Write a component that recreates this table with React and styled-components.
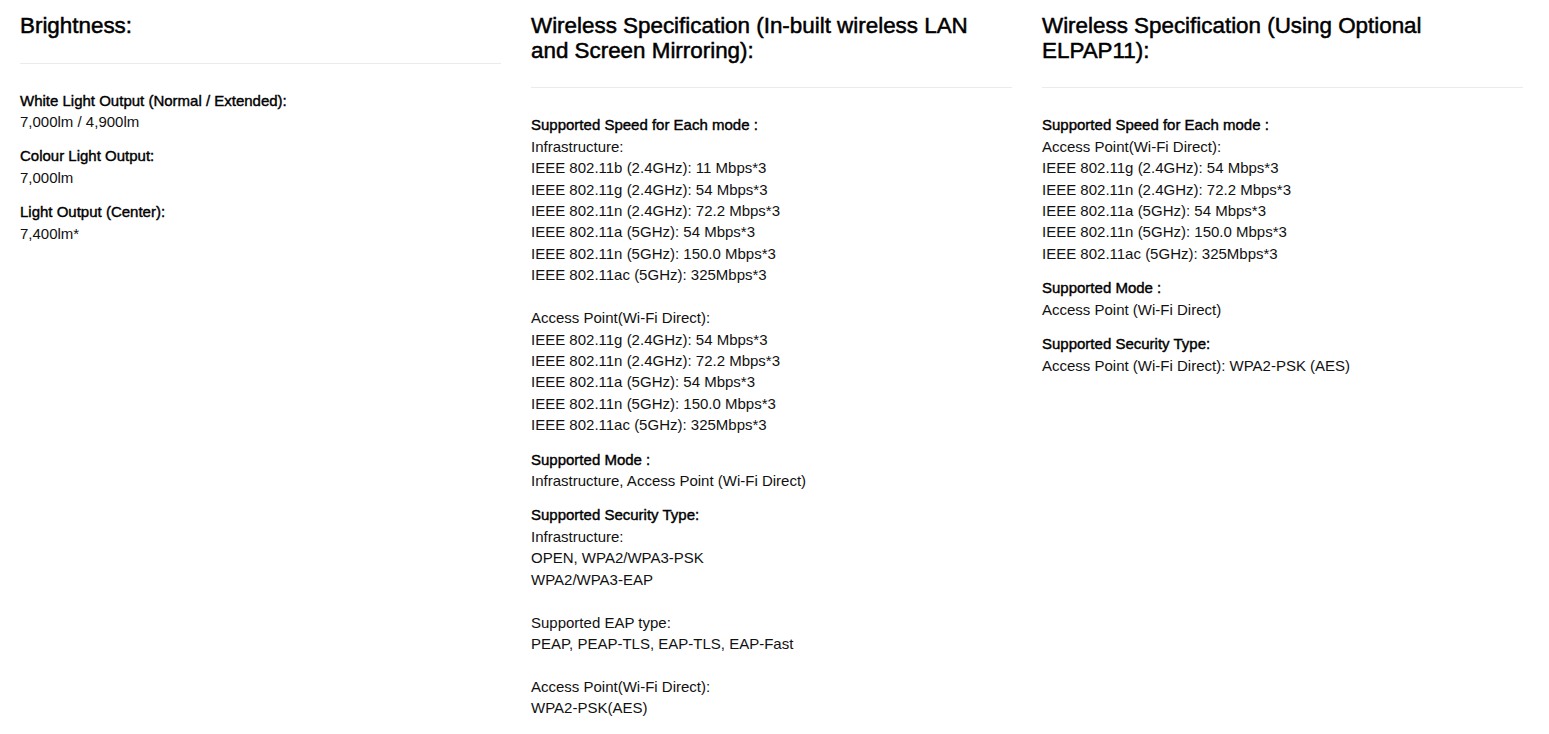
import React from 'react';
import styled, { createGlobalStyle } from 'styled-components';

const GlobalStyle = createGlobalStyle`
  body {
    margin: 0;
    background: #fff;
    font-family: "Liberation Sans", Arial, Helvetica, sans-serif;
    color: #111;
  }
`;

// Layout
const Page = styled.div`
  display: grid;
  grid-template-columns: repeat(3, 481px);
  column-gap: 30px;
  padding: 14px 26px 20px 20px;
`;

const Column = styled.section`
  display: flex;
  flex-direction: column;
`;

const Heading = styled.h3`
  margin: 0;
  max-width: 460px;
  font-size: 22.4px;
  line-height: 1.1;
  font-weight: 400;
  color: #000;
  -webkit-text-stroke: 0.5px #000;
`;

const Divider = styled.hr`
  margin: 24px 0 26px;
  border: 0;
  border-top: 1px solid #ebebeb;
  height: 0;
`;

const Group = styled.div`
  margin-bottom: 13px;
  font-size: 15px;
  line-height: 1.4286;
`;

const Label = styled.div`
  color: #000;
  -webkit-text-stroke: 0.4px #000;
`;

const Line = styled.div`
  min-height: ${({ $blank }) => ($blank ? '21.43px' : 'auto')};
`;

const columns = [
  {
    title: 'Brightness:',
    groups: [
      { label: 'White Light Output (Normal / Extended):', lines: ['7,000lm / 4,900lm'] },
      { label: 'Colour Light Output:', lines: ['7,000lm'] },
      { label: 'Light Output (Center):', lines: ['7,400lm*'] },
    ],
  },
  {
    title: 'Wireless Specification (In-built wireless LAN and Screen Mirroring):',
    groups: [
      {
        label: 'Supported Speed for Each mode :',
        lines: [
          'Infrastructure:',
          'IEEE 802.11b (2.4GHz): 11 Mbps*3',
          'IEEE 802.11g (2.4GHz): 54 Mbps*3',
          'IEEE 802.11n (2.4GHz): 72.2 Mbps*3',
          'IEEE 802.11a (5GHz): 54 Mbps*3',
          'IEEE 802.11n (5GHz): 150.0 Mbps*3',
          'IEEE 802.11ac (5GHz): 325Mbps*3',
          '',
          'Access Point(Wi-Fi Direct):',
          'IEEE 802.11g (2.4GHz): 54 Mbps*3',
          'IEEE 802.11n (2.4GHz): 72.2 Mbps*3',
          'IEEE 802.11a (5GHz): 54 Mbps*3',
          'IEEE 802.11n (5GHz): 150.0 Mbps*3',
          'IEEE 802.11ac (5GHz): 325Mbps*3',
        ],
      },
      { label: 'Supported Mode :', lines: ['Infrastructure, Access Point (Wi-Fi Direct)'] },
      {
        label: 'Supported Security Type:',
        lines: [
          'Infrastructure:',
          'OPEN, WPA2/WPA3-PSK',
          'WPA2/WPA3-EAP',
          '',
          'Supported EAP type:',
          'PEAP, PEAP-TLS, EAP-TLS, EAP-Fast',
          '',
          'Access Point(Wi-Fi Direct):',
          'WPA2-PSK(AES)',
        ],
      },
    ],
  },
  {
    title: 'Wireless Specification (Using Optional ELPAP11):',
    groups: [
      {
        label: 'Supported Speed for Each mode :',
        lines: [
          'Access Point(Wi-Fi Direct):',
          'IEEE 802.11g (2.4GHz): 54 Mbps*3',
          'IEEE 802.11n (2.4GHz): 72.2 Mbps*3',
          'IEEE 802.11a (5GHz): 54 Mbps*3',
          'IEEE 802.11n (5GHz): 150.0 Mbps*3',
          'IEEE 802.11ac (5GHz): 325Mbps*3',
        ],
      },
      { label: 'Supported Mode :', lines: ['Access Point (Wi-Fi Direct)'] },
      { label: 'Supported Security Type:', lines: ['Access Point (Wi-Fi Direct): WPA2-PSK (AES)'] },
    ],
  },
];

const App = () => (
  <>
    <GlobalStyle />
    <Page>
      {columns.map((col) => (
        <Column key={col.title}>
          <Heading>{col.title}</Heading>
          <Divider />
          {col.groups.map((g) => (
            <Group key={g.label}>
              <Label>{g.label}</Label>
              {g.lines.map((line, i) => (
                <Line key={i} $blank={line === ''}>
                  {line}
                </Line>
              ))}
            </Group>
          ))}
        </Column>
      ))}
    </Page>
  </>
);

export default App;
